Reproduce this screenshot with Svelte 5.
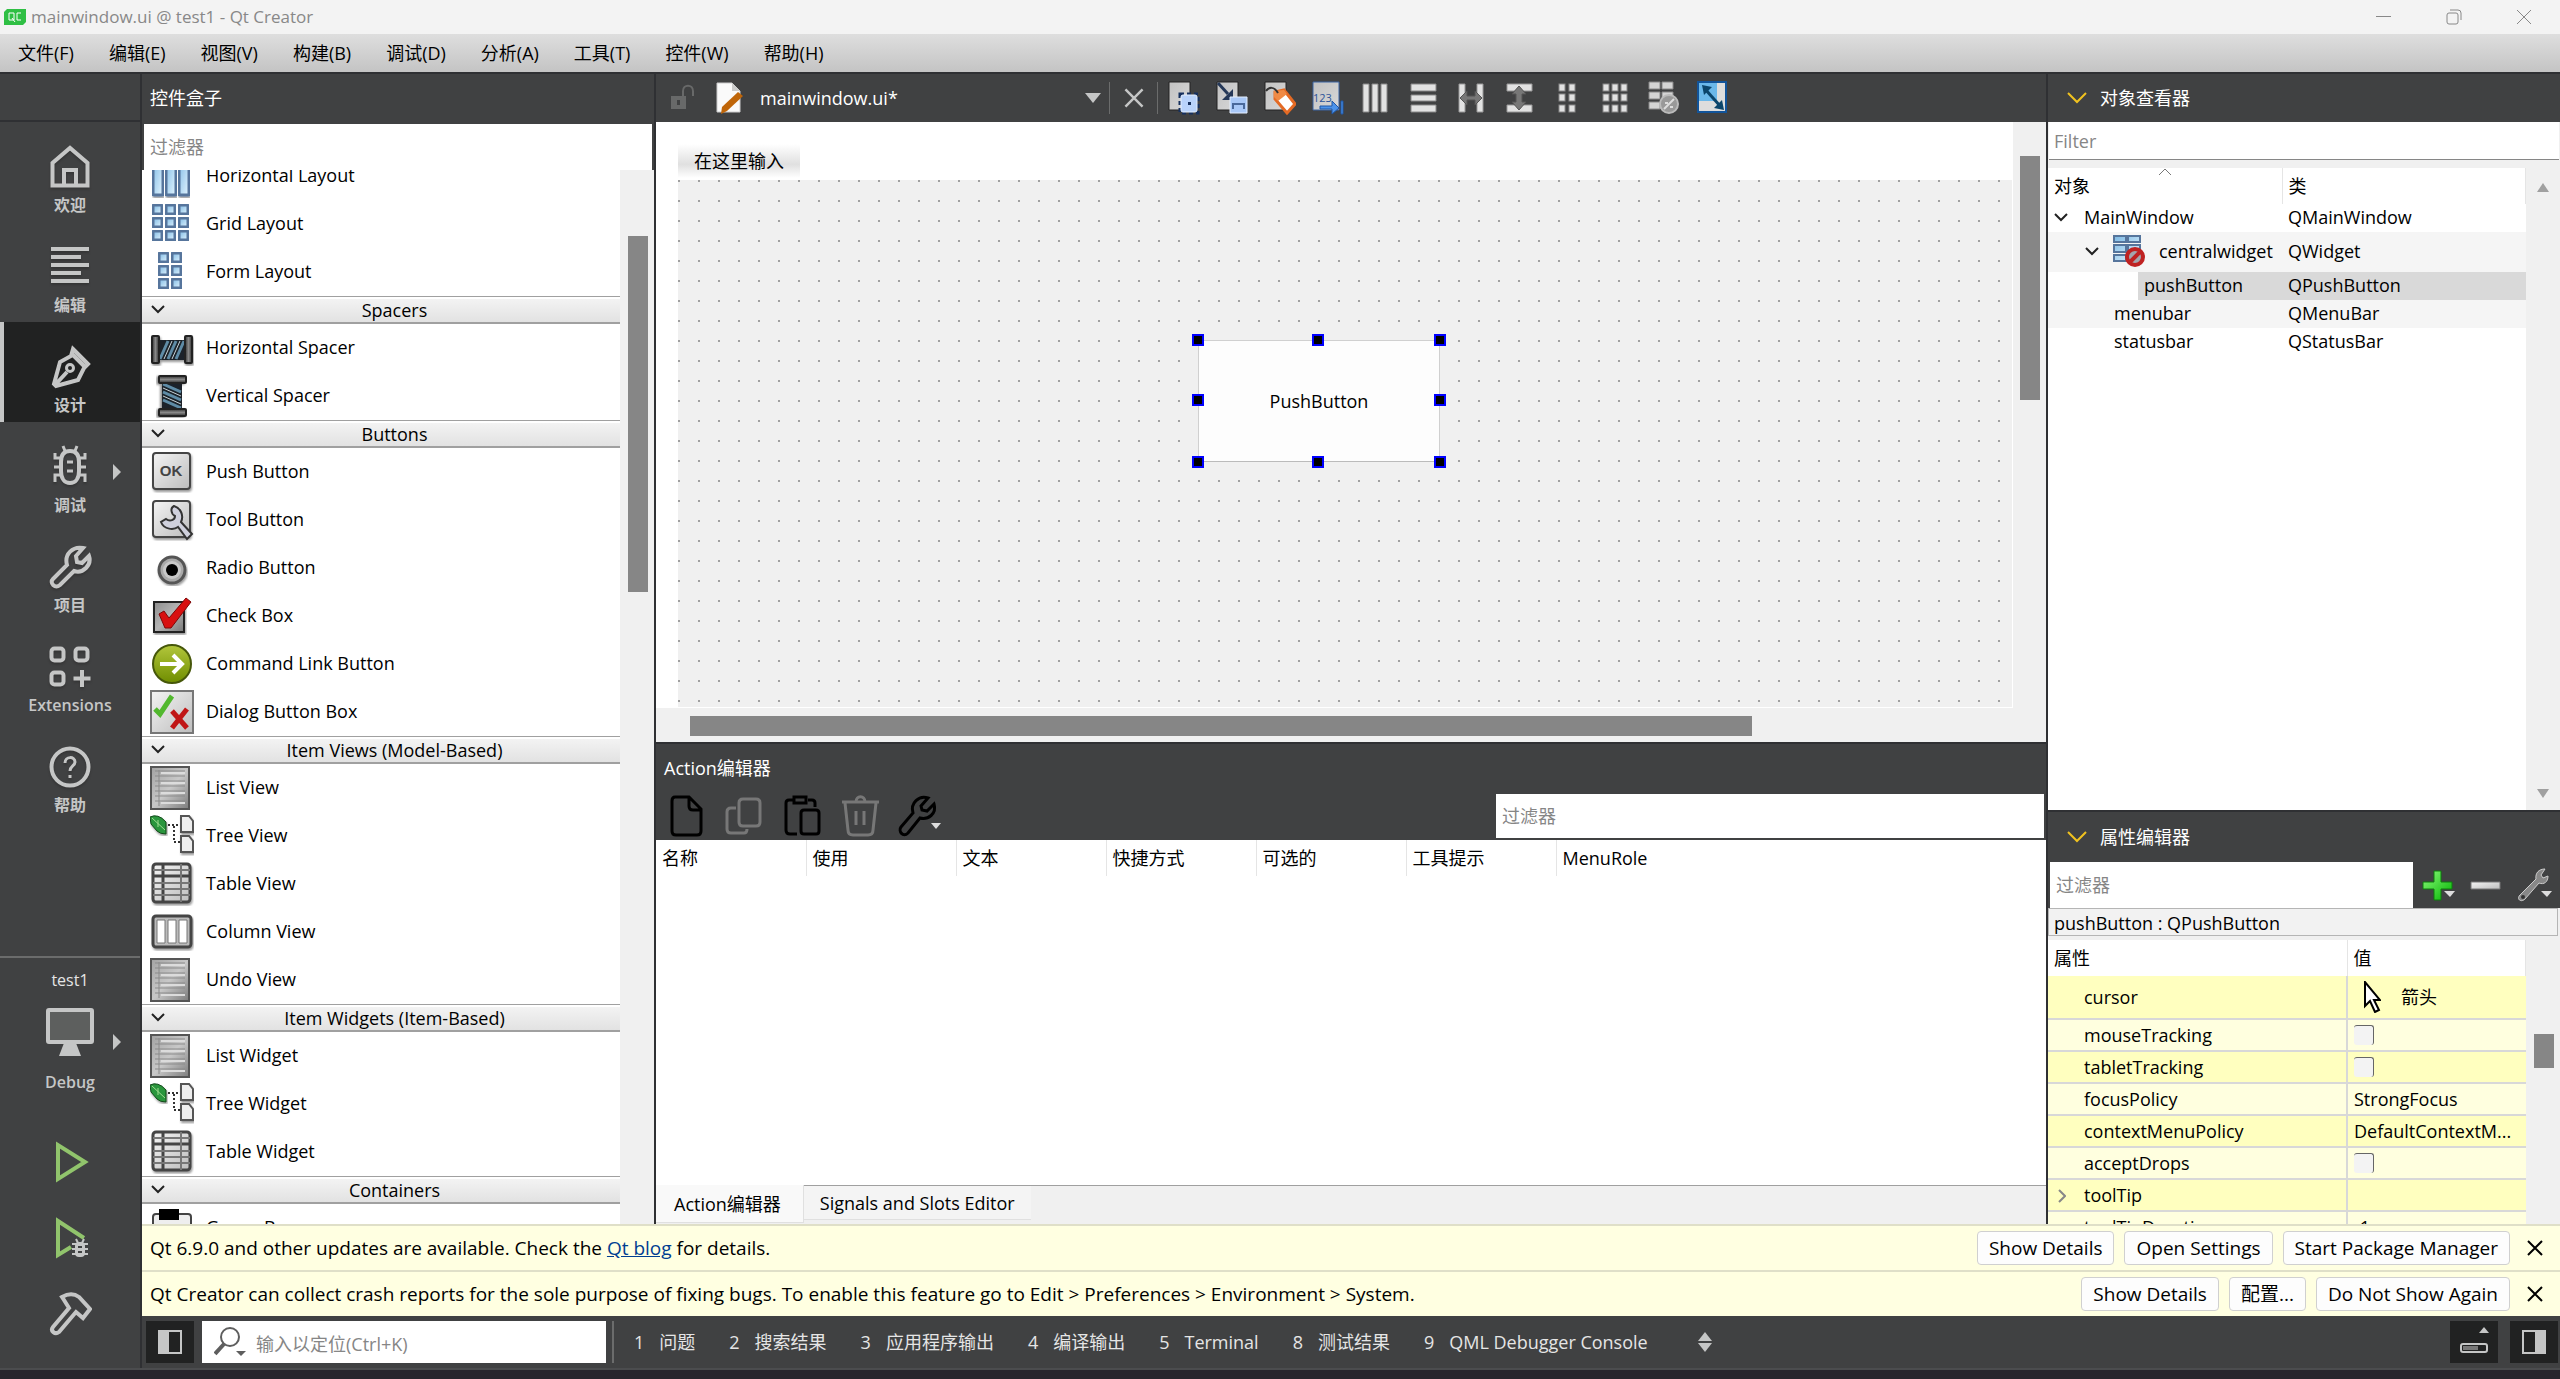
<script>
    const menus = ["文件(F)", "编辑(E)", "视图(V)", "构建(B)", "调试(D)", "分析(A)", "工具(T)", "控件(W)", "帮助(H)"];

    const modes = [
        { icon: "home", label: "欢迎" },
        { icon: "lines", label: "编辑" },
        { icon: "pen", label: "设计" },
        { icon: "bug", label: "调试", arrow: true },
        { icon: "wrench", label: "项目" },
        { icon: "extensions", label: "Extensions" },
        { icon: "help", label: "帮助" },
    ];
    let currentMode = $state("设计");

    const categories = [
        {
            items: [
                ["hlayout", "Horizontal Layout"],
                ["grid", "Grid Layout"],
                ["form", "Form Layout"],
            ],
        },
        {
            title: "Spacers",
            items: [
                ["hspacer", "Horizontal Spacer"],
                ["vspacer", "Vertical Spacer"],
            ],
        },
        {
            title: "Buttons",
            items: [
                ["push", "Push Button"],
                ["tool", "Tool Button"],
                ["radio", "Radio Button"],
                ["check", "Check Box"],
                ["command", "Command Link Button"],
                ["dialog", "Dialog Button Box"],
            ],
        },
        {
            title: "Item Views (Model-Based)",
            items: [
                ["list", "List View"],
                ["tree", "Tree View"],
                ["table", "Table View"],
                ["column", "Column View"],
                ["list", "Undo View"],
            ],
        },
        {
            title: "Item Widgets (Item-Based)",
            items: [
                ["list", "List Widget"],
                ["tree", "Tree Widget"],
                ["table", "Table Widget"],
            ],
        },
        { title: "Containers", items: [["group", "Group Box"]] },
    ];

    const designTools = [
        ["t-widgets", "编辑控件"],
        ["t-signals", "编辑信号/槽"],
        ["t-buddies", "编辑伙伴"],
        ["t-tab", "编辑Tab顺序"],
        ["t-hlayout", "水平布局"],
        ["t-vlayout", "垂直布局"],
        ["t-hsplit", "水平拆分"],
        ["t-vsplit", "垂直拆分"],
        ["t-form", "窗体布局"],
        ["t-grid", "栅格布局"],
        ["t-break", "打破布局"],
        ["t-adjust", "调整大小"],
    ];

    const actionTools = [
        ["a-new", "新建"],
        ["a-copy", "复制"],
        ["a-paste", "粘贴"],
        ["a-trash", "删除"],
        ["a-wrench", "配置"],
    ];

    const actionColumns = ["名称", "使用", "文本", "快捷方式", "可选的", "工具提示", "MenuRole"];
    const handles = ["nw", "n", "ne", "w", "e", "sw", "s", "se"];

    const properties = [
        { name: "mouseTracking", type: "bool" },
        { name: "tabletTracking", type: "bool" },
        { name: "focusPolicy", value: "StrongFocus" },
        { name: "contextMenuPolicy", value: "DefaultContextM..." },
        { name: "acceptDrops", type: "bool" },
        { name: "toolTip", value: "", expandable: true },
        { name: "toolTipDuration", value: "-1" },
    ];

    const outputs = [
        [1, "问题"],
        [2, "搜索结果"],
        [3, "应用程序输出"],
        [4, "编译输出"],
        [5, "Terminal"],
        [8, "测试结果"],
        [9, "QML Debugger Console"],
    ];
</script>

{#snippet chevron()}
    <svg class="chevron" width="14" height="9" viewBox="0 0 14 9"><path d="M1 1l6 6 6-6" /></svg>
{/snippet}

{#snippet modeIcon(name)}
    <svg class="mode-icon" width="44" height="44" viewBox="0 0 44 44">
        {#if name === "home"}
            <path d="M4.500 40.500V18L22 3l17.500 15v22.500zM16 40V25h12v15" stroke-width="4" />
        {:else if name === "lines"}
            <path d="M3 4h38M3 12h30M3 20h38M3 28h30M3 36h38" stroke-width="4" />
        {:else if name === "pen"}
            <path d="M25 4l15 15-4 4-6 12-22 6-2-2 6-22 11-6zM23 8l14 14M7 40l12-13" stroke-width="4" />
            <circle cx="22" cy="23" r="3.500" />
        {:else if name === "bug"}
            <path d="M13 17c0-8 4-11 9-11s9 3 9 11v9c0 8-4 12-9 12s-9-4-9-12z" stroke-width="4" />
            <path d="M17 6l-2-5M27 6l2-5M13 13H7V8M31 13h6V8M13 22H6M31 22h7M13 30H7v7M31 30h6v7M19 17h6M19 26h6" />
        {:else if name === "wrench"}
            <path d="M5 34L19 20C16 9 25 1 35 3l-7 8 1 6 5 1 7-7c3 9-6 18-15 15L12 40c-5 4-11-2-7-6z" stroke-width="4" />
        {:else if name === "extensions"}
            <rect x="3.500" y="3.500" width="12" height="12" rx="3" stroke-width="4" />
            <rect x="27.500" y="3.500" width="12" height="12" rx="3" stroke-width="4" />
            <rect x="3.500" y="27.500" width="12" height="12" rx="3" stroke-width="4" />
            <path d="M25.500 33.500h17M34 25v17" stroke-width="4" />
        {:else if name === "help"}
            <circle cx="22" cy="22" r="18.500" stroke-width="4" />
            <path d="M17 18c0-7 10-7 10-1 0 4-5 4-5 9M22 30v3" />
        {/if}
    </svg>
{/snippet}

{#snippet widgetIcon(name)}
    <svg width="44" height="44" viewBox="0 0 44 44">
        {#if name === "hlayout"}
            {#each [3, 16, 29] as x}
                <rect {x} y="2" width="10" height="39" rx="1" fill="url(#blue)" stroke="#56759c" stroke-width="3" filter="url(#shade)" />
            {/each}
        {:else if name === "grid"}
            {#each [3, 16, 29] as x}
                {#each [3, 16, 29] as y}
                    <rect {x} {y} width="9" height="9" rx="1" fill="url(#blue)" stroke="#56759c" stroke-width="3" filter="url(#shade)" />
                {/each}
            {/each}
        {:else if name === "form"}
            {#each [9, 22] as x}
                {#each [3, 16, 29] as y}
                    <rect {x} {y} width="9" height="9" rx="1" fill="url(#blue)" stroke="#56759c" stroke-width="3" filter="url(#shade)" />
                {/each}
            {/each}
        {:else if name === "hspacer" || name === "vspacer"}
            <g transform={name === "vspacer" ? "rotate(90 22 22)" : "translate(0 2)"} filter="url(#shade)">
                <path d="M9 12h26v20H9z" fill="#1b2329" />
                <path d="M10 31l8-18M18 31l8-18M26 31l8-18" stroke="#5e8ba6" stroke-width="3" />
                <path d="M14 31l8-18M22 31l8-18" stroke="#c9d3d9" stroke-width="1" />
                <rect x="2" y="8" width="7" height="27" rx="1" fill="url(#dark)" stroke="#222" stroke-width="2" />
                <rect x="35" y="8" width="7" height="27" rx="1" fill="url(#dark)" stroke="#222" stroke-width="2" />
            </g>
        {:else if name === "push" || name === "tool"}
            <rect x="3" y="3" width="37" height="36" rx="3" fill="url(#silver)" stroke="#444" stroke-width="2" filter="url(#shade)" />
            {#if name === "push"}
                <text x="21" y="26" text-anchor="middle" font-family="Liberation Sans, sans-serif" font-size="15" font-weight="bold" fill="#444">OK</text>
            {:else}
                <path d="M24 8c-4 2-3 8 1 10 0 4-5 6-9 3l-5 3c3 8 13 8 17 5l9 12 5-5-11-12c3-6 0-14-7-16z" fill="#cfd0dc" stroke="#333" stroke-width="2" />
            {/if}
        {:else if name === "radio"}
            <circle cx="22" cy="24" r="13" fill="#aaa" stroke="#555" stroke-width="3" filter="url(#shade)" />
            <circle cx="22" cy="24" r="9" fill="#c8c8c8" />
            <circle cx="22" cy="24" r="6" />
        {:else if name === "check"}
            <rect x="4" y="8" width="30" height="30" fill="url(#metal)" stroke="#222" stroke-width="2" filter="url(#shade)" />
            <path d="M9 20l5-3 5 7L36 4l5 4-20 26h-6z" fill="#d81010" stroke="#7d0808" stroke-width="1" />
        {:else if name === "command"}
            <circle cx="22" cy="22" r="19" fill="url(#olive)" stroke="#46570a" stroke-width="2" />
            <path d="M10 22h20M23 13l9 9-9 9" fill="none" stroke="#fff" stroke-width="4" />
        {:else if name === "dialog"}
            <rect x="1" y="1" width="42" height="42" fill="url(#silver)" stroke="#777" stroke-width="2" />
            <path d="M5 19l5 5L22 6" fill="none" stroke="#52b82e" stroke-width="5" />
            <path d="M22 21l15 17M37 19L22 38" stroke="#c01616" stroke-width="5" />
        {:else if name === "list"}
            <rect x="1" y="1" width="38" height="42" fill="url(#sheet)" stroke="#555" stroke-width="2" />
            <path d="M5 5h30M5 10h30M5 15h30M5 20h30M5 25h30M5 30h30M5 35h30M9 4v36" stroke="#8b8b8b" stroke-width="1" />
            <path d="M11 7h24M11 17h24M11 27h24M11 37h24" stroke="#dcdcdc" stroke-width="2" />
        {:else if name === "tree"}
            <path d="M0 3q8-4 16 5v12q-6 0-9-3L1 10z" fill="#2c963c" stroke="#124a1c" filter="url(#shade)" />
            <path d="M2 4l13 12M8 6v7" stroke="#9edc90" />
            <path d="M18 11h12M24 12v16h6" fill="none" stroke="#333" stroke-width="2" stroke-dasharray="2 2" />
            <path d="M31 2h8l4 5v11H31zM31 22h8l4 5v11H31z" fill="#eee" stroke="#555" stroke-width="2" filter="url(#shade)" />
        {:else if name === "table"}
            <rect x="3" y="2" width="37" height="38" rx="3" fill="url(#silver)" stroke="#444" stroke-width="3" filter="url(#shade)" />
            <path d="M13 2v38M3 14h37" stroke="#444" stroke-width="3" />
            <path d="M3 8h37M3 21h37M3 27h37M3 33h37M31 2v38" stroke="#777" stroke-width="2" />
        {:else if name === "column"}
            <rect x="3" y="6" width="38" height="31" rx="3" fill="#bbb" stroke="#444" stroke-width="3" filter="url(#shade)" />
            <path d="M7 10h8v23H7zM18 10h8v23h-8zM29 10h8v23h-8z" fill="#fff" stroke="#777" />
        {:else if name === "group"}
            <rect x="3" y="8" width="38" height="34" rx="3" fill="#eee" stroke="#444" stroke-width="2" />
            <path d="M9 3h20v11H9z" />
        {/if}
    </svg>
{/snippet}

{#snippet toolIcon(name)}
    <svg width="32" height="36" viewBox="0 0 32 36">
        {#if name === "t-widgets"}
            <path d="M1 2h21v28H1z" fill="url(#steel)" stroke="#222" />
            <path d="M12 14h18v19H12z" fill="none" stroke="#16305e" stroke-width="3" stroke-dasharray="4 3" />
            <rect x="13" y="15" width="16" height="17" rx="2" fill="#b9d3fb" stroke="#e4efff" />
            <path d="M20 22h3v3h-3z" fill="#16305e" />
        {:else if name === "t-signals"}
            <path d="M1 2h21v28H1z" fill="url(#steel)" stroke="#222" />
            <path d="M2 3l10 11" stroke="#253858" stroke-width="3" />
            <path d="M17 9v11H6z" fill="#253858" />
            <path d="M14 17h17v16H14z" fill="#a9c8f7" stroke="#e4efff" />
            <path d="M17 29v-5h11v5" fill="none" stroke="#4a699b" stroke-width="2" />
        {:else if name === "t-buddies"}
            <path d="M1 2h21v28H1z" fill="url(#steel)" stroke="#222" />
            <path d="M11 12l9-2 11 14-8 9-12-14z" fill="#fff" stroke="#e46a24" stroke-width="3" />
            <path d="M10 11l10-1 3 4-9 7-4-4z" fill="#f08a45" />
            <path d="M2 11c3-4 8-5 12 2" fill="none" stroke="#333" stroke-width="2" />
        {:else if name === "t-tab"}
            <path d="M1 2h26v28H1z" fill="url(#steel)" stroke="#3a64a3" />
            <text x="1" y="22" font-family="Open Sans, sans-serif" font-size="11" fill="#2a5298">123</text>
            <path d="M8 26h12v-5l7 7-7 6v-5H8zM29 21h2v13h-2z" fill="#4c93ea" stroke="#1f56a5" />
        {:else if name === "t-hlayout"}
            <path d="M3 4h6v28H3zM12 4h6v28h-6zM21 4h6v28h-6z" fill="#e2e2e2" stroke="#888" />
        {:else if name === "t-vlayout"}
            <path d="M3 4h25v7H3zM3 15h25v6H3zM3 25h25v7H3z" fill="#e2e2e2" stroke="#888" />
        {:else if name === "t-hsplit"}
            <path d="M3 4h6v28H3zM21 4h6v28h-6z" fill="#e2e2e2" stroke="#999" />
            <path d="M4 18l7-7v5h8v-5l7 7-7 7v-5h-8v5z" fill="#777" stroke="#555" />
        {:else if name === "t-vsplit"}
            <path d="M3 4h25v7H3zM3 25h25v7H3z" fill="#e2e2e2" stroke="#999" />
            <path d="M15 6l7 8h-4v8h4l-7 8-7-8h4v-8H8z" fill="#777" stroke="#555" />
        {:else if name === "t-form" || name === "t-grid"}
            {#each name === "t-grid" ? [3, 12, 21] : [7, 17] as x}
                {#each [4, 14, 25] as y}
                    <rect {x} {y} width="6" height="7" fill="#e2e2e2" stroke="#888" />
                {/each}
            {/each}
        {:else if name === "t-break"}
            <path d="M1 2h11v7H1zM14 2h11v7H14zM1 12h11v7H1zM14 12h11v7H14zM1 22h11v7H1z" fill="#d4d4d4" stroke="#888" />
            <circle cx="21" cy="24" r="9" fill="#999" stroke="#bbb" stroke-width="2" />
            <path d="M16 29l10-10M17 23h3M22 27h3" stroke="#ddd" stroke-width="2" />
        {:else if name === "t-adjust"}
            <path d="M2 2h28v30H2z" fill="#ddd" stroke="#12549a" stroke-width="2" />
            <path d="M3 3h18v18H3z" fill="#6bb8ea" />
            <path d="M9 9l16 18" stroke="#0b456b" stroke-width="3" />
            <path d="M6 5l10 2-8 8zM28 30l-10-2 8-8z" fill="#0b456b" />
        {/if}
    </svg>
{/snippet}

{#snippet actionIcon(name)}
    <svg width="44" height="44" viewBox="0 0 44 44" fill="none" stroke="#000" stroke-width="3">
        {#if name === "a-new"}
            <path d="M10 3h14l12 12v22q0 4-4 4H11q-4 0-4-4V7q0-4 3-4zM24 4v8q0 4 4 4h8" />
        {:else if name === "a-copy"}
            <path d="M20 5h13q4 0 4 4v19q0 4-4 4H20q-4 0-4-4V9q0-4 4-4zM13 14H8q-4 0-4 4v17q0 4 4 4h13q3 0 3-4" stroke="#777" />
        {:else if name === "a-paste"}
            <path d="M12 6H8q-3 0-3 3v27q0 4 4 4h7M27 6h4q3 0 3 3v4M13 3h12v6H13zM23 16h12q3 0 3 3v18q0 3-3 3H23q-3 0-3-3V19q0-3 3-3z" />
        {:else if name === "a-trash"}
            <path d="M3 8h37M17 8c0-7 9-7 9 0M6 9l3 27q0 5 5 5h15q5 0 5-5l3-27M17 17v14M25 17v14" stroke="#777" />
        {:else}
            <path d="M4 33L16 19C13 9 22 1 31 4l-7 8 1 4 5 1 7-7c3 10-6 16-14 14L11 39c-5 5-10-2-7-6z" />
            <path d="M34 29h10l-5 6z" fill="#ddd" stroke="none" />
        {/if}
    </svg>
{/snippet}

{#snippet cross(size)}
    <svg width={size} height={size} viewBox="0 0 18 18" fill="none" stroke="currentColor" stroke-width="2"><path d="M2 2l14 14M16 2L2 16" /></svg>
{/snippet}

<svg class="defs" width="0" height="0" aria-hidden="true">
    <linearGradient id="blue" x1="0" y1="0" x2="1" y2="1"><stop offset="0" stop-color="#7db9e4" /><stop offset="1" stop-color="#e3f5ff" /></linearGradient>
    <linearGradient id="silver" x1="0" y1="0" x2="1" y2="1"><stop offset="0" stop-color="#f4f4f4" /><stop offset="1" stop-color="#bdbdbd" /></linearGradient>
    <linearGradient id="steel" x1="0" y1="0" x2="1" y2="1"><stop offset="0" stop-color="#c2c2c2" /><stop offset="1" stop-color="#d8d8d8" /></linearGradient>
    <linearGradient id="metal" x1="0" y1="0" x2="1" y2="1"><stop offset="0" stop-color="#8d8d8d" /><stop offset="0.500" stop-color="#b5b5b5" /><stop offset="1" stop-color="#777" /></linearGradient>
    <linearGradient id="sheet" x1="0" y1="0" x2="1" y2="1"><stop offset="0" stop-color="#a2a2a2" /><stop offset="0.500" stop-color="#c8c8c8" /><stop offset="1" stop-color="#7c7c7c" /></linearGradient>
    <linearGradient id="dark" x1="0" y1="0" x2="1" y2="0"><stop offset="0" stop-color="#333" /><stop offset="0.500" stop-color="#888" /><stop offset="1" stop-color="#333" /></linearGradient>
    <linearGradient id="olive" x1="0" y1="0" x2="0" y2="1"><stop offset="0" stop-color="#b3c73c" /><stop offset="1" stop-color="#6f8d00" /></linearGradient>
    <linearGradient id="green" x1="0" y1="0" x2="1" y2="1"><stop offset="0" stop-color="#8dfa7c" /><stop offset="1" stop-color="#00b400" /></linearGradient>
    <filter id="shade"><feDropShadow dx="1" dy="2" stdDeviation="1" flood-opacity="0.400" /></filter>
</svg>

<div class="window">
    <header class="titlebar">
        <svg width="22" height="16" viewBox="0 0 22 16">
            <path d="M3 0h19v13l-3 3H0V3z" fill="#2fbf44" />
            <path d="M5 4h5v7H5zM17 4h-4v7h4M8 9l3 4" fill="none" stroke="#fff" stroke-width="1" />
        </svg>
        <span class="title">mainwindow.ui @ test1 - Qt Creator</span>
        <button aria-label="最小化"><svg width="16" height="16" viewBox="0 0 16 16"><path d="M0 7.500h15" /></svg></button>
        <button aria-label="还原"><svg width="16" height="16" viewBox="0 0 16 16"><rect x="1" y="4" width="11" height="11" rx="2" /><path d="M4 1h8q3 0 3 3v7" /></svg></button>
        <button aria-label="关闭"><svg width="16" height="16" viewBox="0 0 16 16"><path d="M1 1l14 14M15 1L1 15" /></svg></button>
    </header>

    <nav class="menubar">
        {#each menus as menu}
            <button>{menu}</button>
        {/each}
    </nav>

    <div class="workspace">
        <aside class="modebar">
            <div class="corner"></div>
            {#each modes as mode}
                <button class="mode" class:active={currentMode === mode.label} onclick={() => (currentMode = mode.label)}>
                    {@render modeIcon(mode.icon)}
                    <span>{mode.label}</span>
                    {#if mode.arrow}<i class="arrow"></i>{/if}
                </button>
            {/each}
            <div class="target">
                <span>test1</span>
                <button class="kit">
                    <svg width="48" height="48" viewBox="0 0 48 48"><path d="M18 35h12l5 13H13z" fill="#c5c6c6" /><rect x="2" y="2" width="44" height="32" rx="1" fill="#5d5f5e" stroke="#c5c6c6" stroke-width="4" /></svg>
                    <b>Debug</b>
                    <i class="arrow"></i>
                </button>
                <button class="run" aria-label="运行">
                    <svg width="44" height="44" viewBox="0 0 44 44"><path d="M10 5v34l27-17z" fill="none" stroke="#91c46c" stroke-width="4" /></svg>
                </button>
                <button class="run" aria-label="调试运行">
                    <svg width="44" height="44" viewBox="0 0 44 44">
                        <path d="M36 22L10 5v34l13-8" fill="none" stroke="#91c46c" stroke-width="4" />
                        <rect x="27" y="26" width="10" height="15" rx="4" fill="#c5c6c6" />
                        <path d="M24 28h16M24 33h16M24 38h16M28 23l2 4M36 23l-2 4" stroke="#c5c6c6" stroke-width="2" />
                        <path d="M30 31h4M30 36h4" stroke="#404142" stroke-width="2" />
                    </svg>
                </button>
                <button class="run" aria-label="构建">
                    <svg width="44" height="44" viewBox="0 0 44 44"><path d="M14 5c7-4 13-3 17 0l11 12-7 9-7-6-17 20c-4 3-9-1-6-5l16-19-5-8z" fill="none" stroke="#c5c6c6" stroke-width="4" /></svg>
                </button>
            </div>
        </aside>

        <div class="content">
            <div class="docks">
                <section class="widgetbox">
                    <h2>控件盒子</h2>
                    <input class="filter" aria-label="过滤器" placeholder="过滤器" />
                    <div class="scroller">
                        <div class="list">
                            {#each categories as category}
                                {#if category.title}
                                    <button class="category">{@render chevron()}<span>{category.title}</span></button>
                                {/if}
                                {#each category.items as [icon, label]}
                                    <div class="widget">{@render widgetIcon(icon)}<span>{label}</span></div>
                                {/each}
                            {/each}
                        </div>
                        <div class="vbar"><i class="thumb"></i></div>
                    </div>
                </section>

                <main>
                    <div class="toolbar">
                        <svg class="lock" width="26" height="28" viewBox="0 0 26 28"><path d="M1 12h15v13H1z" fill="#686969" /><path d="M13 12V7c0-7 10-7 10 0v5" fill="none" stroke="#686969" stroke-width="2" /><path d="M7 16h3v5H7z" fill="#404142" /></svg>
                        <svg width="30" height="32" viewBox="0 0 30 32"><path d="M1 1h15l8 8v21H1z" fill="#fafafa" stroke="#ccc" /><path d="M16 1v8h8" fill="#ccc" /><path d="M22 10l5 4L11 29l-6 3 1-7z" fill="#bf6508" /></svg>
                        <button class="file"><span>mainwindow.ui*</span><i class="down"></i></button>
                        <button class="close" aria-label="关闭文档">{@render cross(22)}</button>
                        <div class="tools">
                            {#each designTools as [icon, label]}
                                <button aria-label={label}>{@render toolIcon(icon)}</button>
                            {/each}
                        </div>
                    </div>

                    <div class="editor">
                        <div class="canvas">
                            <div class="form-menu"><button>在这里输入</button></div>
                            <div class="form">
                                <div class="selection">
                                    <button>PushButton</button>
                                    {#each handles as handle}
                                        <i class="handle {handle}"></i>
                                    {/each}
                                </div>
                            </div>
                        </div>
                        <div class="vbar"><i class="thumb"></i></div>
                        <div class="hbar"><i class="thumb"></i></div>
                    </div>

                    <section class="actions">
                        <h2>Action编辑器</h2>
                        <div class="action-bar">
                            {#each actionTools as [icon, label]}
                                <button aria-label={label}>{@render actionIcon(icon)}</button>
                            {/each}
                            <input class="filter" aria-label="过滤器" placeholder="过滤器" />
                        </div>
                        <div class="action-list">
                            <table>
                                <thead><tr>{#each actionColumns as column}<th>{column}</th>{/each}</tr></thead>
                            </table>
                        </div>
                        <div class="tabs">
                            <button class="current">Action编辑器</button>
                            <button>Signals and Slots Editor</button>
                        </div>
                    </section>
                </main>

                <aside class="inspector">
                    <h2><svg width="22" height="14" viewBox="0 0 22 14"><path d="M2 2l9 9 9-9" fill="none" stroke="#f0c21f" stroke-width="2" /></svg>对象查看器</h2>
                    <input class="object-filter" aria-label="Filter" placeholder="Filter" />
                    <div class="objects">
                        <table>
                            <thead><tr><th>对象<svg class="sort" width="14" height="8" viewBox="0 0 14 8"><path d="M1 7l6-6 6 6" /></svg></th><th>类</th></tr></thead>
                            <tbody>
                                <tr><td><div class="node">{@render chevron()}<span>MainWindow</span></div></td><td>QMainWindow</td></tr>
                                <tr class="alt tall">
                                    <td>
                                        <div class="node level1">
                                            {@render chevron()}
                                            <svg width="32" height="32" viewBox="0 0 32 32">
                                                <path d="M1 1h12v6H1zM15 1h12v6H15zM1 10h12v7H1zM15 10h12v7H15zM1 20h12v6H1z" fill="url(#blue)" stroke="#56759c" stroke-width="2" />
                                                <circle cx="22" cy="22" r="8" fill="#a3a5ad" stroke="#bf2222" stroke-width="4" />
                                                <path d="M16 28l12-12" stroke="#bf2222" stroke-width="4" />
                                            </svg>
                                            <span>centralwidget</span>
                                        </div>
                                    </td>
                                    <td>QWidget</td>
                                </tr>
                                <tr class="selected"><td><div class="picked">pushButton</div></td><td>QPushButton</td></tr>
                                <tr class="alt"><td><div class="leaf">menubar</div></td><td>QMenuBar</td></tr>
                                <tr><td><div class="leaf">statusbar</div></td><td>QStatusBar</td></tr>
                            </tbody>
                        </table>
                        <div class="vbar arrows"><i class="up"></i><i class="down"></i></div>
                    </div>

                    <section class="props">
                        <h2><svg width="22" height="14" viewBox="0 0 22 14"><path d="M2 2l9 9 9-9" fill="none" stroke="#f0c21f" stroke-width="2" /></svg>属性编辑器</h2>
                        <div class="prop-bar">
                            <input class="filter" aria-label="过滤器" placeholder="过滤器" />
                            <button aria-label="添加动态属性"><svg width="36" height="36" viewBox="0 0 36 36"><path d="M13 4h7v11h11v7H20v11h-7V22H2v-7h11z" fill="url(#green)" stroke="#0c7d0c" /><path d="M23 24h11l-5 6z" fill="#ddd" /></svg></button>
                            <button aria-label="删除动态属性"><svg width="36" height="36" viewBox="0 0 36 36"><path d="M2 15h29v7H2z" fill="url(#silver)" stroke="#777" /></svg></button>
                            <button aria-label="配置属性编辑器"><svg width="36" height="36" viewBox="0 0 36 36"><path d="M3 28L19 12c-1-6 3-10 9-10l-4 6 2 3 5-2c0 6-4 9-9 7L8 32c-4 4-9 0-5-4z" fill="#888" stroke="#ccc" /><circle cx="6" cy="30" r="2" fill="#333" /><path d="M24 24h11l-5 6z" fill="#ddd" /></svg></button>
                        </div>
                        <div class="object-name">pushButton : QPushButton</div>
                        <div class="prop-area">
                            <table>
                                <thead><tr><th>属性</th><th>值</th></tr></thead>
                                <tbody>
                                    <tr class="cursor">
                                        <td>cursor</td>
                                        <td>
                                            <div class="cursor-value">
                                                <svg width="18" height="32" viewBox="0 0 18 32"><path d="M2 1v24l5-5 5 11 4-2-5-10h6z" fill="#fff" stroke="#000" stroke-width="2" /></svg>
                                                箭头
                                            </div>
                                        </td>
                                    </tr>
                                    {#each properties as prop}
                                        <tr>
                                            <td>
                                                {#if prop.expandable}<svg class="expand" width="8" height="14" viewBox="0 0 8 14"><path d="M1 1l6 6-6 6" /></svg>{/if}
                                                {prop.name}
                                            </td>
                                            <td>
                                                {#if prop.type === "bool"}
                                                    <input type="checkbox" aria-label={prop.name} />
                                                {:else}
                                                    {prop.value}
                                                {/if}
                                            </td>
                                        </tr>
                                    {/each}
                                </tbody>
                            </table>
                            <div class="vbar"><i class="thumb"></i></div>
                        </div>
                    </section>
                </aside>
            </div>

            <div class="infobar">
                <p>Qt 6.9.0 and other updates are available. Check the <a href="https://www.qt.io/blog">Qt blog</a> for details.</p>
                <button>Show Details</button>
                <button>Open Settings</button>
                <button>Start Package Manager</button>
                <button class="dismiss" aria-label="关闭">{@render cross(18)}</button>
            </div>
            <div class="infobar">
                <p>Qt Creator can collect crash reports for the sole purpose of fixing bugs. To enable this feature go to Edit &gt; Preferences &gt; Environment &gt; System.</p>
                <button>Show Details</button>
                <button>配置...</button>
                <button>Do Not Show Again</button>
                <button class="dismiss" aria-label="关闭">{@render cross(18)}</button>
            </div>

            <footer>
                <button class="toggle" aria-label="左边栏"><svg width="24" height="24" viewBox="0 0 24 24"><path d="M0 0h24v24H0z" fill="#c5c6c6" /><path d="M11 2h11v20H11z" fill="#212222" /></svg></button>
                <label class="locator">
                    <svg width="32" height="32" viewBox="0 0 32 32"><circle cx="16" cy="11" r="9" fill="none" stroke="#5e5e5e" stroke-width="2" /><path d="M10 18L1 28" stroke="#5e5e5e" stroke-width="4" /><path d="M22 25h10l-5 5z" fill="#5e5e5e" /></svg>
                    <input placeholder="输入以定位(Ctrl+K)" aria-label="输入以定位" />
                </label>
                <div class="outputs">
                    {#each outputs as [number, label]}
                        <button><span>{number}</span><span>{label}</span></button>
                    {/each}
                    <button class="spinner" aria-label="更多"><i class="up"></i><i class="down"></i></button>
                </div>
                <button class="toggle" aria-label="进度"><svg width="30" height="30" viewBox="0 0 30 30"><path d="M20 6l5-6 5 6z" fill="#c5c6c6" /><rect x="2" y="17" width="26" height="8" rx="2" fill="#212222" stroke="#c5c6c6" stroke-width="2" /><path d="M4 19h15v4H4z" fill="#777" /></svg></button>
                <button class="toggle" aria-label="右边栏"><svg width="24" height="24" viewBox="0 0 24 24"><path d="M0 0h24v24H0z" fill="#c5c6c6" /><path d="M2 2h11v20H2z" fill="#212222" /></svg></button>
            </footer>
        </div>
    </div>
    <div class="taskbar"></div>
</div>

<style>
    :global(body) {
        margin: 0;
        background: #404142;
    }

    * {
        box-sizing: border-box;
    }

    .window,
    button,
    input {
        font-family: "Open Sans", "Noto Sans CJK SC", sans-serif;
        font-size: 18px;
        line-height: 24px;
    }

    .window {
        display: flex;
        flex-direction: column;
        height: 100vh;
        color: #000;
        overflow: hidden;
    }

    .defs {
        position: absolute;
    }

    svg {
        display: block;
        flex-shrink: 0;
    }

    button {
        padding: 0;
        border: 0;
        background: none;
        color: inherit;
        white-space: nowrap;
    }

    input {
        min-width: 0;
        border: 0;
        border-radius: 0;
        outline: none;
        background: #fff;
    }

    input::placeholder {
        color: #868686;
        opacity: 1;
    }

    h2 {
        display: flex;
        align-items: center;
        gap: 12px;
        height: 48px;
        margin: 0;
        padding-left: 8px;
        font-size: 18px;
        font-weight: normal;
        color: #fff;
        background: #404142;
        flex-shrink: 0;
    }

    table {
        border-collapse: collapse;
        table-layout: fixed;
    }

    th,
    td {
        padding: 0 0 0 6px;
        font-weight: normal;
        text-align: left;
        white-space: nowrap;
        overflow: hidden;
    }

    th {
        height: 36px;
        background: #fff;
        border-right: 1px solid #e5e5e5;
    }

    .titlebar {
        display: flex;
        align-items: center;
        height: 34px;
        padding: 0 1px 0 4px;
        background: #f3f3f3;
        color: #888;
        flex-shrink: 0;
    }

    .title {
        flex: 1;
        padding-left: 5px;
        font-size: 17px;
    }

    .titlebar button {
        display: flex;
        justify-content: center;
        width: 70px;
    }

    .titlebar button svg {
        fill: none;
        stroke: #888;
    }

    .menubar {
        display: flex;
        gap: 1px;
        height: 40px;
        padding-left: 1px;
        background: linear-gradient(#dedede, #c4c4c4);
        border-bottom: 2px solid #2f3033;
        flex-shrink: 0;
    }

    .menubar button {
        padding: 0 17px;
    }

    .workspace {
        display: flex;
        flex: 1;
        min-height: 0;
    }

    .modebar {
        display: flex;
        flex-direction: column;
        width: 142px;
        background: #404142;
        border-right: 2px solid #2f3033;
        color: #c5c6c6;
        flex-shrink: 0;
    }

    .corner {
        height: 48px;
        border-bottom: 2px solid #2f3033;
    }

    .mode {
        display: flex;
        flex-direction: column;
        align-items: center;
        gap: 4px;
        height: 100px;
        padding-top: 23px;
        position: relative;
        font-size: 16px;
        font-weight: 600;
    }

    .mode.active {
        background: #212222;
        box-shadow: inset 4px 0 #c5c6c6;
    }

    .mode-icon {
        fill: none;
        stroke: #c5c6c6;
        stroke-width: 3;
        filter: drop-shadow(0 2px 1px #2226);
    }

    .arrow {
        position: absolute;
        right: 19px;
        top: 42px;
        border: 8px solid transparent;
        border-left-color: #c5c6c6;
        border-right: 0;
    }

    .target {
        display: flex;
        flex-direction: column;
        align-items: center;
        height: 412px;
        margin-top: auto;
        padding-top: 10px;
        border-top: 2px solid #6b6c6c;
    }

    .target > span {
        font-size: 16px;
        color: #e5e5e5;
    }

    .kit {
        display: flex;
        flex-direction: column;
        align-items: center;
        gap: 14px;
        width: 100%;
        height: 118px;
        padding-top: 16px;
        margin-bottom: 14px;
        position: relative;
    }

    .kit b {
        font-size: 16px;
        font-weight: 600;
    }

    .run {
        display: grid;
        place-items: center;
        height: 76px;
    }

    .content {
        display: flex;
        flex-direction: column;
        flex: 1;
        min-width: 0;
    }

    .docks {
        display: flex;
        flex: 1;
        min-height: 0;
    }

    .widgetbox {
        display: flex;
        flex-direction: column;
        width: 514px;
        border-right: 2px solid #2f3033;
        background: #404142;
        flex-shrink: 0;
    }

    .widgetbox h2 {
        height: 50px;
        padding-bottom: 2px;
    }

    .widgetbox .filter {
        height: 46px;
        margin: 0 2px;
        padding: 0 6px;
    }

    .scroller {
        display: flex;
        flex: 1;
        min-height: 0;
        overflow: hidden;
        background: #f0f0f0;
    }

    .list {
        flex: 1;
        height: 100%;
        margin-top: -18px;
        background: #fff;
    }

    .widget {
        display: flex;
        align-items: center;
        gap: 12px;
        height: 48px;
        padding-left: 8px;
        background: #fff;
    }

    .widget span {
        padding-bottom: 3px;
    }

    .category {
        display: flex;
        align-items: center;
        width: 100%;
        height: 28px;
        padding-left: 9px;
        border-top: 1px solid #a0a0a0;
        border-bottom: 2px solid #a0a0a0;
        background: linear-gradient(#fff 2px, #f3f3f3 2px, #e2e2e2);
    }

    .category span {
        flex: 1;
        padding-left: 4px;
    }

    .chevron {
        fill: none;
        stroke: #222;
        stroke-width: 2;
    }

    .vbar {
        width: 34px;
        background: #f0f0f0;
        flex-shrink: 0;
    }

    .thumb {
        display: block;
        width: 20px;
        height: 356px;
        margin: 66px auto 0 8px;
        background: #868686;
    }

    main {
        display: flex;
        flex-direction: column;
        flex: 1;
        min-width: 0;
        border-right: 2px solid #2f3033;
        background: #f0f0f0;
    }

    .toolbar {
        display: flex;
        align-items: center;
        height: 48px;
        padding-left: 14px;
        background: #404142;
        flex-shrink: 0;
    }

    .lock {
        margin-right: 20px;
    }

    .file {
        display: flex;
        align-items: center;
        justify-content: space-between;
        width: 364px;
        height: 32px;
        padding: 0 8px 0 14px;
        border-right: 1px solid #6b6c6c;
        color: #fff;
    }

    .up,
    .down {
        border: 8px solid transparent;
        border-top: 10px solid #c5c6c6;
        border-bottom: 0;
    }

    .up {
        border-top: 0;
        border-bottom: 10px solid #c5c6c6;
    }

    .close {
        display: grid;
        place-items: center;
        width: 48px;
        height: 32px;
        border-right: 1px solid #6b6c6c;
        color: #c5c6c6;
    }

    .tools {
        display: flex;
        gap: 16px;
        padding-left: 10px;
    }

    .editor {
        display: grid;
        grid-template-columns: 1fr 33px;
        grid-template-rows: 1fr 34px;
        height: 620px;
    }

    .canvas {
        display: flex;
        flex-direction: column;
        padding: 22px 1px 1px 22px;
        background: #fff;
        min-width: 0;
    }

    .form-menu {
        height: 36px;
    }

    .form-menu button {
        height: 34px;
        padding: 0 16px;
        background: linear-gradient(#fff, #e0e0e0 60%, #fff);
    }

    .form {
        flex: 1;
        position: relative;
        background: radial-gradient(circle at 1px 1px, #a0a0a0 1px, #f0f0f0 1px) 0 0 / 20px 20px;
    }

    .selection {
        position: absolute;
        left: 520px;
        top: 160px;
        width: 242px;
        height: 122px;
    }

    .selection button {
        width: 100%;
        height: 100%;
        border: 1px solid #d0d0d0;
        border-bottom-color: #bbb;
        background: #fdfdfd;
    }

    .handle {
        position: absolute;
        width: 12px;
        height: 12px;
        border: 2px solid #00f;
        background: #000;
    }

    .nw,
    .n,
    .ne {
        top: -6px;
    }

    .w,
    .e {
        top: 54px;
    }

    .sw,
    .s,
    .se {
        bottom: -6px;
    }

    .nw,
    .w,
    .sw {
        left: -6px;
    }

    .n,
    .s {
        left: 114px;
    }

    .ne,
    .e,
    .se {
        right: -6px;
    }

    .editor .vbar {
        width: 33px;
    }

    .editor .vbar .thumb {
        height: 244px;
        margin: 34px 0 0 7px;
    }

    .hbar {
        grid-column: span 2;
        padding: 8px 33px 0 34px;
    }

    .hbar .thumb {
        width: calc(80% + 4px);
        height: 20px;
        margin: 0;
    }

    .actions {
        display: flex;
        flex-direction: column;
        flex: 1;
        min-height: 0;
        border-top: 2px solid #2f3033;
    }

    .action-bar {
        display: flex;
        align-items: center;
        gap: 14px;
        height: 48px;
        padding: 0 2px 0 9px;
        background: #404142;
    }

    .action-bar .filter {
        width: 548px;
        height: 44px;
        margin-left: auto;
        padding: 0 6px;
    }

    .action-list {
        flex: 1;
        background: #fff;
        border-bottom: 1px solid #a0a0a0;
    }

    .action-list th {
        width: 150px;
    }

    .action-list th:last-child {
        border: 0;
    }

    .tabs {
        display: flex;
        align-items: flex-start;
        height: 38px;
    }

    .tabs button {
        height: 34px;
        padding: 0 16px;
        background: #f4f4f4;
        border-bottom: 1px solid #e0e0e0;
    }

    .tabs .current {
        height: 38px;
        margin-top: -1px;
        padding: 0 22px 0 18px;
        border-right: 1px solid #e0e0e0;
        background: #f9f9f9;
    }

    .inspector {
        display: flex;
        flex-direction: column;
        width: 512px;
        background: #f0f0f0;
        flex-shrink: 0;
    }

    .inspector h2 {
        padding-left: 18px;
    }

    .object-filter {
        height: 38px;
        margin: 0 1px 8px;
        padding: 0 5px;
        border-bottom: 1px solid #868686;
    }

    .objects {
        display: flex;
        justify-content: space-between;
        flex: 1;
        min-height: 0;
        background: #fff;
    }

    .objects table,
    .prop-area table {
        width: 478px;
        height: max-content;
    }

    .objects th:first-child {
        width: 234px;
    }

    .objects th {
        position: relative;
    }

    .sort {
        position: absolute;
        left: 110px;
        top: 0;
        fill: none;
        stroke: #777;
    }

    .objects td {
        height: 28px;
        padding-bottom: 2px;
    }

    .objects .tall td {
        height: 40px;
    }

    .alt {
        background: #f5f5f5;
    }

    .selected td {
        background: #d9d9d9;
    }

    .selected td:first-child {
        padding-left: 90px;
        background: linear-gradient(90deg, #fff 90px, #d9d9d9 90px);
    }

    .picked {
        padding-left: 6px;
    }

    .leaf {
        padding-left: 60px;
    }

    .node {
        display: flex;
        align-items: center;
        gap: 16px;
    }

    .level1 {
        gap: 14px;
        padding-left: 31px;
    }

    .arrows {
        display: flex;
        flex-direction: column;
        justify-content: space-between;
        align-items: center;
        padding: 15px 0 12px;
    }

    .arrows .up {
        border-color: transparent transparent #a0a0a0;
        border-width: 0 6px 9px;
    }

    .arrows .down {
        border-color: #a0a0a0 transparent transparent;
        border-width: 9px 6px 0;
    }

    .props {
        display: flex;
        flex-direction: column;
        height: 414px;
        border-top: 2px solid #2f3033;
    }

    .props h2 {
        height: 50px;
    }

    .prop-bar {
        display: flex;
        align-items: center;
        gap: 12px;
        height: 46px;
        padding: 0 7px 0 2px;
        background: #404142;
    }

    .prop-bar .filter {
        flex: 1;
        height: 46px;
        padding: 0 6px;
        margin-right: -4px;
    }

    .object-name {
        height: 28px;
        margin-right: 2px;
        padding-left: 5px;
        border: 1px solid #b5b5b5;
        background: #f2f2f2;
        line-height: 28px;
    }

    .prop-area {
        display: flex;
        flex: 1;
        min-height: 0;
        margin-top: 4px;
        overflow: hidden;
    }

    .prop-area .vbar .thumb {
        height: 34px;
        margin: 94px 0 0 8px;
    }

    .prop-area th:first-child {
        width: 299px;
    }

    .prop-area td {
        height: 32px;
        border-bottom: 2px solid #d8d8d8;
        line-height: 20px;
    }

    .prop-area td:first-child {
        position: relative;
        padding-left: 36px;
        border-right: 2px solid #d8d8d8;
    }

    .prop-area tbody tr {
        background: #ffffdf;
    }

    .prop-area tbody tr:nth-child(odd) {
        background: #ffffbf;
    }

    .prop-area .cursor td {
        height: 43px;
    }

    .cursor-value {
        display: flex;
        align-items: center;
        gap: 20px;
        padding-left: 9px;
    }

    .expand {
        position: absolute;
        left: 10px;
        top: 9px;
        fill: none;
        stroke: #888;
        stroke-width: 2;
    }

    input[type="checkbox"] {
        display: block;
        width: 20px;
        height: 20px;
        margin: 0;
        appearance: none;
        border: 1px solid #666;
        border-width: 1px 1px 0 0;
        border-radius: 3px;
        background: #f3f3f3;
    }

    .infobar {
        display: flex;
        align-items: center;
        gap: 10px;
        height: 46px;
        padding: 0 16px 0 8px;
        border-top: 2px solid #dfdfc8;
        background: #ffffe1;
        font-size: 19px;
        flex-shrink: 0;
    }

    .infobar p {
        flex: 1;
        margin: 0;
    }

    .infobar a {
        color: #003e92;
    }

    .infobar button {
        height: 34px;
        padding: 0 11px;
        border: 1px solid #d0d0d0;
        border-radius: 4px;
        background: #fdfdfd;
        font-size: 19px;
    }

    .infobar .dismiss {
        margin-left: 6px;
        padding: 0;
        border: 0;
        background: none;
    }

    footer {
        display: flex;
        align-items: center;
        height: 52px;
        padding: 0 2px 0 4px;
        background: #404142;
        color: #e5e5e5;
        flex-shrink: 0;
    }

    .toggle {
        display: grid;
        place-items: center;
        width: 48px;
        height: 42px;
        background: #212222;
    }

    .toggle + .toggle {
        margin-left: 12px;
    }

    .locator {
        display: flex;
        align-items: center;
        gap: 10px;
        width: 404px;
        height: 42px;
        margin: 0 6px 0 8px;
        padding-left: 12px;
        background: #fff;
    }

    .locator input {
        flex: 1;
        padding: 4px 0 0;
    }

    .outputs {
        display: flex;
        align-items: center;
        gap: 34px;
        flex: 1;
        height: 42px;
        padding-left: 20px;
        border-left: 2px solid #6b6c6c;
    }

    .outputs button {
        display: flex;
        gap: 15px;
    }

    .outputs .spinner {
        flex-direction: column;
        gap: 2px;
        margin-left: 16px;
    }

    .spinner .up {
        border-width: 0 7px 9px;
    }

    .spinner .down {
        border-width: 9px 7px 0;
    }

    .taskbar {
        height: 11px;
        border-top: 2px solid #4b4c4e;
        background: #28252c;
        flex-shrink: 0;
    }
</style>
